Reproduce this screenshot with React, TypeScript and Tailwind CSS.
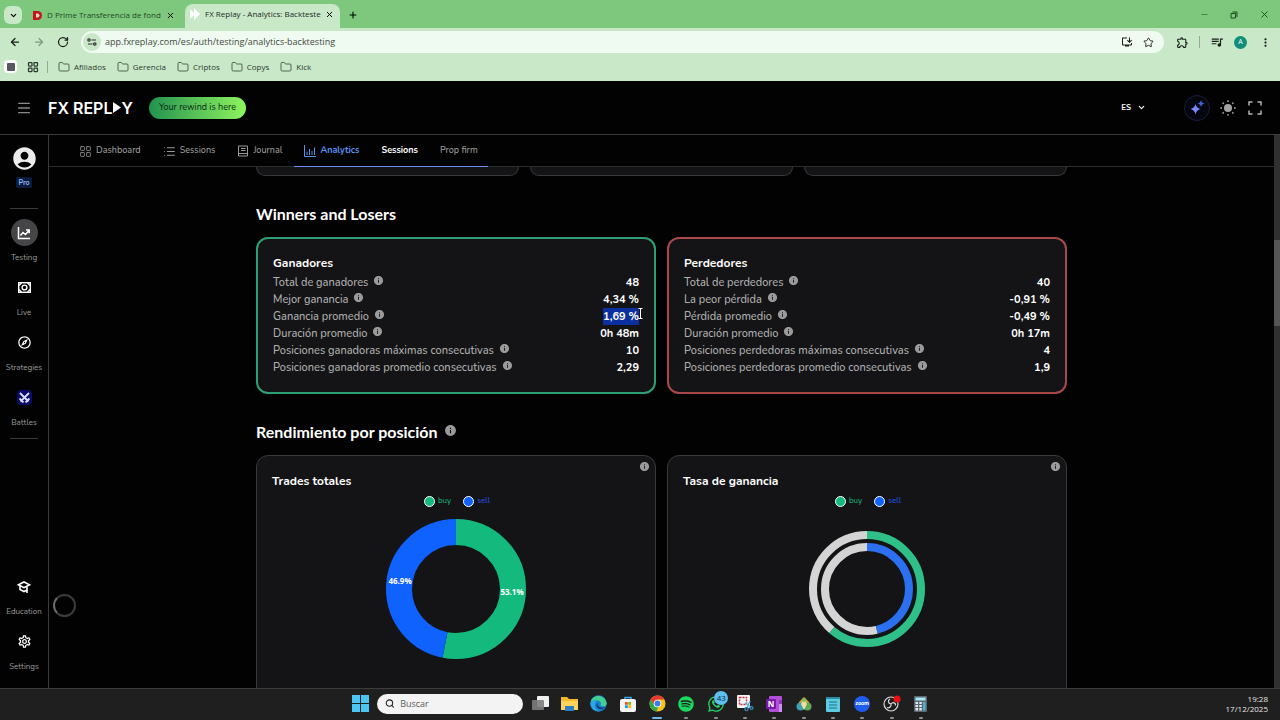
import type { ReactNode } from 'react';
import {
  ArrowLeft,
  ArrowRight,
  ChevronDown,
  Folder,
  LayoutGrid,
  List,
  Menu,
  Minus,
  Plus,
  RotateCw,
  Search,
  Star,
  X,
} from 'lucide-react';
import {
  MdAccountCircle,
  MdInfo,
  MdMoreVert,
  MdOutlineExplore,
  MdOutlineExtension,
  MdOutlineInstallDesktop,
  MdOutlineSettings,
  MdQueueMusic,
} from 'react-icons/md';
import { FaSpotify, FaWhatsapp } from 'react-icons/fa';

const APP_FONT = "font-['Nunito','Lato',sans-serif]";
const CHROME_FONT = "font-['Segoe_UI','Open_Sans',sans-serif]";

const BUY = '#14b97d';
const SELL = '#0f62fe';

interface Stat {
  label: string;
  value: string;
  selected?: boolean;
}

const WINNERS: Stat[] = [
  { label: 'Total de ganadores', value: '48' },
  { label: 'Mejor ganancia', value: '4,34 %' },
  { label: 'Ganancia promedio', value: '1,69 %', selected: true },
  { label: 'Duración promedio', value: '0h 48m' },
  { label: 'Posiciones ganadoras máximas consecutivas', value: '10' },
  { label: 'Posiciones ganadoras promedio consecutivas', value: '2,29' },
];

const LOSERS: Stat[] = [
  { label: 'Total de perdedores', value: '40' },
  { label: 'La peor pérdida', value: '-0,91 %' },
  { label: 'Pérdida promedio', value: '-0,49 %' },
  { label: 'Duración promedio', value: '0h 17m' },
  { label: 'Posiciones perdedoras máximas consecutivas', value: '4' },
  { label: 'Posiciones perdedoras promedio consecutivas', value: '1,9' },
];

const BOOKMARKS = ['Afiliados', 'Gerencia', 'Criptos', 'Copys', 'Kick'];

/* ---------- Browser ---------- */

function TabStrip() {
  return (
    <div className="flex h-7 shrink-0 items-end bg-[#7dc87d] pl-1">
      <button aria-label="Search tabs" className="mb-1 flex h-[18px] w-[18px] items-center justify-center rounded-md bg-[#c8e8c8]">
        <ChevronDown size={9} strokeWidth={3} />
      </button>
      <div className="mb-1 ml-2.5 flex h-[18px] w-[143px] items-center">
        <svg width="11" height="11" viewBox="0 0 11 11" className="shrink-0">
          <path d="M1 1h4.5a4.5 4.5 0 0 1 0 9H1z" fill="#c2151b" />
          <path d="M4 3.5h1.5a2 2 0 0 1 0 4H4z" fill="#e9d2c4" />
        </svg>
        <span className="ml-1 text-[8px] whitespace-nowrap text-[#1f4a22]">D Prime Transferencia de fond</span>
        <button aria-label="Close tab" className="ml-auto"><X size={9} strokeWidth={2.5} /></button>
      </div>
      <div className="ml-2.5 flex h-6 w-[155px] items-center rounded-t-lg bg-[#c8e8c8] pr-1.5 pb-1 pl-1">
        <svg width="12" height="12" viewBox="0 0 12 12" className="shrink-0">
          <path d="M1 1l5 5-5 5zM5 0l6 6-6 6z" fill="#fff" />
        </svg>
        <span className="ml-1 text-[8px] whitespace-nowrap text-[#1d2b1e]">FX Replay - Analytics: Backteste</span>
        <button aria-label="Close tab" className="ml-auto"><X size={9} strokeWidth={2.5} /></button>
      </div>
      <button aria-label="New tab" className="mb-2 ml-2"><Plus size={10} strokeWidth={2.5} /></button>
      <div className="mb-2 ml-auto flex items-center gap-5 pr-2.5 text-[#1d4a20]">
        <button aria-label="Minimize"><Minus size={9} strokeWidth={1.5} /></button>
        <button aria-label="Restore">
          <svg width="10" height="10" viewBox="0 0 10 10" fill="none" stroke="currentColor">
            <path d="M2 3.5h4.5V8H2zM3.5 2H8v5" />
          </svg>
        </button>
        <button aria-label="Close"><X size={11} strokeWidth={2} /></button>
      </div>
    </div>
  );
}

function Toolbar() {
  return (
    <div className="flex h-7 shrink-0 items-center bg-[#c8e8c8] pr-2 pl-[9px] text-[#1b1f1b]">
      <button aria-label="Back"><ArrowLeft size={12} strokeWidth={2.5} /></button>
      <button aria-label="Forward" className="ml-3 text-[#7f9a80]"><ArrowRight size={12} strokeWidth={2.5} /></button>
      <button aria-label="Reload" className="ml-3"><RotateCw size={12} strokeWidth={2.5} /></button>
      <div className="ml-3 flex h-[22px] flex-1 items-center rounded-full bg-[#effaf0] pr-2.5 pl-0.5">
        <button aria-label="Site information" className="flex h-[18px] w-[18px] items-center justify-center rounded-full bg-[#c8e8c8]">
          <svg width="10" height="8" viewBox="0 0 10 8" fill="none" stroke="#333" strokeWidth="1.2">
            <circle cx="2" cy="2" r="1.2" />
            <path d="M4.5 2H9M1 6h4.5" />
            <circle cx="7.8" cy="6" r="1.2" />
          </svg>
        </button>
        <input
          aria-label="Address"
          defaultValue="app.fxreplay.com/es/auth/testing/analytics-backtesting"
          className="ml-1 min-w-0 flex-1 bg-transparent text-[9px] text-[#3f4a40] outline-none"
        />
        <button aria-label="Install app"><MdOutlineInstallDesktop size={12} /></button>
        <button aria-label="Bookmark page" className="ml-2.5"><Star size={11} strokeWidth={2} /></button>
      </div>
      <button aria-label="Extensions" className="ml-3"><MdOutlineExtension size={13} /></button>
      <span className="ml-2.5 h-3 w-px bg-[#8fae90]" />
      <button aria-label="Media" className="ml-2.5"><MdQueueMusic size={14} /></button>
      <button aria-label="Profile" className="ml-2.5 flex h-[13px] w-[13px] items-center justify-center rounded-full bg-[#0f8f78] text-[7px] text-white">A</button>
      <button aria-label="Menu" className="ml-3"><MdMoreVert size={13} /></button>
    </div>
  );
}

function BookmarkBar() {
  return (
    <div className="flex h-[25px] shrink-0 items-center bg-[#c8e8c8] pb-1 pl-1 text-[8px] text-[#2c3a2d]">
      <span className="flex h-[13px] w-[13px] items-center justify-center rounded-sm bg-white">
        <span className="h-2 w-2 rounded-[1px] bg-[#56595f]" />
      </span>
      <LayoutGrid size={12} strokeWidth={2.5} className="ml-2.5" />
      <span className="ml-2 h-3 w-px bg-[#8fae90]" />
      <div className="ml-2.5 flex items-center gap-[11px]">
        {BOOKMARKS.map((name) => (
          <a key={name} href="#" className="flex items-center gap-1">
            <Folder size={12} strokeWidth={1.5} />
            {name}
          </a>
        ))}
      </div>
    </div>
  );
}

/* ---------- App shell ---------- */

function Header() {
  return (
    <header className="flex h-[54px] shrink-0 items-center border-b border-[#3a3a3a] pr-[18px] pl-4">
      <button aria-label="Toggle menu" className="text-[#8b8b8b]"><Menu size={16} strokeWidth={2} /></button>
      <a href="#" aria-label="FX REPLAY" className="ml-4 flex items-center font-['Inter',sans-serif] text-[16px] leading-none font-semibold text-white">
        <span className="whitespace-pre">FX REPL</span>
        <svg width="9" height="11" viewBox="0 0 9 11"><path d="M1 0l8 5.5L1 11z" fill="#fff" /></svg>
        <span>Y</span>
      </a>
      <button className="ml-4 h-[22px] rounded-full bg-linear-to-r from-[#1e9350] to-[#8cf55c] px-2.5 text-[9px] text-[#0c2a14]">
        Your rewind is here
      </button>
      <button className="ml-auto flex items-center gap-1.5 text-[8px] font-bold text-white">
        ES
        <ChevronDown size={9} strokeWidth={3} />
      </button>
      <button aria-label="AI assistant" className="ml-[38px] flex h-[26px] w-[26px] items-center justify-center rounded-full border border-[#1b1f3a] bg-[#05060f]">
        <svg width="16" height="16" viewBox="0 0 16 16">
          <path d="M6.5 4q.8 4 5 5-4.2 1-5 5.500-.8-4.500-5-5.500 4.200-1 5-5z" fill="#7b86ff" />
          <path d="M12 0q.5 3 3.500 3.500Q12.500 4 12 7q-.5-3-3.500-3.500Q11.500 3 12 0z" fill="#3c63d8" />
        </svg>
      </button>
      <button aria-label="Theme" className="ml-2.5 text-[#a3a3a3]">
        <svg width="16" height="16" viewBox="0 0 16 16" fill="currentColor">
          <circle cx="8" cy="8" r="4" />
          {[0, 45, 90, 135, 180, 225, 270, 315].map((deg) => (
            <circle key={deg} cx="8" cy="1.2" r="0.9" transform={`rotate(${deg} 8 8)`} />
          ))}
        </svg>
      </button>
      <button aria-label="Full screen" className="ml-3 text-[#b5b5b5]">
        <svg width="14" height="14" viewBox="0 0 14 14" fill="none" stroke="currentColor" strokeWidth="1.5">
          <path d="M1 4.500V1h3.500M9.500 1H13v3.500M13 9.500V13H9.500M4.500 13H1V9.500" />
        </svg>
      </button>
    </header>
  );
}

function SideItem({ label, active, children }: { label: string; active?: boolean; children: ReactNode }) {
  return (
    <a href="#" className="flex w-full flex-col items-center">
      <span
        className={
          active
            ? 'flex h-[27px] w-[27px] items-center justify-center rounded-full bg-[#454548] text-white'
            : 'flex h-[27px] w-[27px] items-center justify-center text-white'
        }
      >
        {children}
      </span>
      <span className="mt-[5px] text-[8px] leading-[14px] text-[#9c9c9c]">{label}</span>
    </a>
  );
}

function Sidebar() {
  return (
    <aside className="flex w-[49px] shrink-0 flex-col items-center border-r border-[#3a3a3a] pt-2.5 pb-3.5">
      <MdAccountCircle size={27} className="text-[#ececec]" />
      <span className="mt-[5px] rounded-xs bg-[#0a1d40] px-0.5 text-[7px] leading-[11px] font-bold text-[#8fb6f5]">Pro</span>
      <span className="mt-5 h-px w-7 shrink-0 bg-[#3a3a3a]" />
      <nav className="mt-2.5 flex w-full flex-col gap-[9px]">
        <SideItem label="Testing" active>
          <svg width="14" height="14" viewBox="0 0 14 14" fill="none" stroke="currentColor" strokeWidth="1.5">
            <path d="M1.500 1v11.500H13M3.500 9.500l2.500-3 2.500 2 3.500-4M9 4h3.200v3.200" />
          </svg>
        </SideItem>
        <SideItem label="Live">
          <svg width="13" height="11" viewBox="0 0 13 11" fill="none" stroke="currentColor" strokeWidth="1.4">
            <rect x="0.7" y="0.7" width="11.6" height="9.6" />
            <circle cx="6.5" cy="5.5" r="2.4" />
            <path d="M1 3.500L3.500 1M9.500 1L12 3.500M1 7.500L3.500 10M12 7.500L9.500 10" />
          </svg>
        </SideItem>
        <SideItem label="Strategies"><MdOutlineExplore size={15} /></SideItem>
        <SideItem label="Battles">
          <span className="flex h-[15px] w-[15px] items-center justify-center rounded-sm bg-[#0c0c66]">
            <svg width="11" height="11" viewBox="0 0 11 11" fill="none" stroke="#d6dcff" strokeWidth="1.8">
              <path d="M1 1l8.500 8.500M10 1L1.500 9.500M0.500 6.500l4 4M10.500 6.500l-4 4" />
            </svg>
          </span>
        </SideItem>
      </nav>
      <span className="mt-2 h-px w-7 shrink-0 bg-[#3a3a3a]" />
      <nav className="mt-auto flex w-full flex-col gap-[9px]">
        <SideItem label="Education">
          <svg width="14" height="14" viewBox="0 0 14 14" fill="none" stroke="currentColor" strokeWidth="1.6">
            <path d="M1.500 4.800L7 2l5.500 2.800L7 7.600zM3 6v3.500L7 11.500l3-1.500M10 6v7" />
          </svg>
        </SideItem>
        <SideItem label="Settings"><MdOutlineSettings size={15} /></SideItem>
      </nav>
    </aside>
  );
}

function SectionNav() {
  return (
    <nav className="flex h-8 shrink-0 items-stretch border-b border-[#2c2c2c] pl-[30px] text-[9px] font-medium text-[#9a9a9a]">
      <a href="#" className="flex items-center gap-1 pt-px">
        <LayoutGrid size={13} strokeWidth={1.5} />
        Dashboard
      </a>
      <a href="#" className="ml-[22px] flex items-center gap-1 pt-px">
        <List size={13} strokeWidth={2} />
        Sessions
      </a>
      <a href="#" className="ml-[22px] flex items-center gap-1 pt-px">
        <svg width="12" height="12" viewBox="0 0 12 12" fill="none" stroke="currentColor">
          <path d="M1.500 1h9v10h-9zM1.500 8.500h9M4 3.500h4.500M4 5.500h4.500" />
        </svg>
        Journal
      </a>
      <div className="-mb-px ml-3 flex border-b border-[#6a8fe8] px-2.5">
        <a href="#" className="flex items-center gap-1 pt-px font-bold text-[#5b92f2]">
          <svg width="12" height="12" viewBox="0 0 12 12" fill="none" stroke="currentColor">
            <path d="M0.500 0v11.500H12M3 10V6.500M5.500 10V4M8 10V6M10.500 10V2.500" />
          </svg>
          Analytics
        </a>
        <a href="#" className="ml-[22px] flex items-center pt-px font-bold text-white">Sessions</a>
        <a href="#" className="ml-[22px] flex items-center pt-px">Prop firm</a>
      </div>
    </nav>
  );
}

/* ---------- Analytics ---------- */

function StatCard({ title, stats, tone }: { title: string; stats: Stat[]; tone: 'win' | 'loss' }) {
  const border = tone === 'win' ? 'border-[#2f9e74]' : 'border-[#a8484a]';
  return (
    <article className={`rounded-xl border-2 bg-[#141416] px-[15px] pt-[15px] pb-4 ${border}`}>
      <h3 className="text-[12px] leading-[18px] font-bold text-white">{title}</h3>
      <dl className="mt-0.5">
        {stats.map((s) => (
          <div key={s.label} className="flex h-[17px] items-center justify-between text-[11px] leading-[17px]">
            <dt className="flex items-start gap-[5px] font-medium text-[#b0b0b0]">
              {s.label}
              <MdInfo size={11} className="mt-px text-[#9a9a9a]" />
            </dt>
            <dd className={s.selected ? 'relative bg-[#0b2f9f] font-bold text-white' : 'font-bold text-white'}>
              {s.value}
              {s.selected && (
                <svg width="5" height="11" viewBox="0 0 5 11" className="absolute top-0 -right-1" fill="none" stroke="#fff">
                  <path d="M0.500 0.500h4M0.500 10.500h4M2.500 0.500v10" />
                </svg>
              )}
            </dd>
          </div>
        ))}
      </dl>
    </article>
  );
}

/** One ring segment drawn as a dashed circle, starting at 12 o'clock */
function Ring({ r, width, from = 0, to, color }: { r: number; width: number; from?: number; to: number; color: string }) {
  return (
    <circle
      cx="70"
      cy="70"
      r={r}
      fill="none"
      stroke={color}
      strokeWidth={width}
      pathLength={100}
      strokeDasharray={`${to - from} ${100 - (to - from)}`}
      strokeDashoffset={-from}
      transform="rotate(-90 70 70)"
    />
  );
}

function ChartCard({ title, children }: { title: string; children: ReactNode }) {
  return (
    <article className="relative h-[250px] rounded-xl border border-[#39393b] bg-[#141416] px-[15px] pt-4">
      <button aria-label={`Info: ${title}`} className="absolute top-[5px] right-[5px] text-[#9a9a9a]">
        <MdInfo size={11} />
      </button>
      <h3 className="text-[12px] leading-[18px] font-bold text-white">{title}</h3>
      <div className="mt-[3px] flex h-4 items-center justify-center gap-3 pl-0.5 text-[8px]">
        <span className="flex items-center gap-[3px] text-[#14b97d]">
          <i className="h-[11px] w-[11px] rounded-full border border-white bg-[#14b97d]" />
          buy
        </span>
        <span className="flex items-center gap-[3px] text-[#2258ec]">
          <i className="h-[11px] w-[11px] rounded-full border border-white bg-[#0f62fe]" />
          sell
        </span>
      </div>
      <svg width="140" height="140" viewBox="0 0 140 140" className="mx-auto mt-2.5">
        {children}
      </svg>
    </article>
  );
}

function Analytics() {
  return (
    <div className="min-h-0 flex-1 overflow-hidden">
      <div className="mx-auto max-w-[811px]">
        <div className="grid grid-cols-3 gap-[11px]">
          {[0, 1, 2].map((i) => (
            <div key={i} className="h-[9px] rounded-b-xl border border-t-0 border-[#39393b] bg-[#141416]" />
          ))}
        </div>

        <h2 className="mt-[27px] font-['Lato',sans-serif] text-[16px] leading-[22px] font-bold text-white">Winners and Losers</h2>
        <div className="mt-3 grid grid-cols-2 gap-[11px]">
          <StatCard title="Ganadores" stats={WINNERS} tone="win" />
          <StatCard title="Perdedores" stats={LOSERS} tone="loss" />
        </div>

        <h2 className="mt-[27px] flex items-center gap-1.5 font-['Lato',sans-serif] text-[16px] leading-[22px] font-bold text-white">
          Rendimiento por posición
          <MdInfo size={13} className="mb-1 text-[#9a9a9a]" />
        </h2>
        <div className="mt-3 grid grid-cols-2 gap-[11px]">
          <ChartCard title="Trades totales">
            <Ring r={57} width={26} to={53.1} color={BUY} />
            <Ring r={57} width={26} from={53.1} to={100} color={SELL} />
            <g fill="#fff" fontSize="8" fontWeight="700" textAnchor="middle" className="font-['Open_Sans',sans-serif]">
              <text x="126" y="76">53.1%</text>
              <text x="14" y="65">46.9%</text>
            </g>
          </ChartCard>
          <ChartCard title="Tasa de ganancia">
            <Ring r={54} width={8} to={61.3} color="#2fc08a" />
            <Ring r={54} width={8} from={61.3} to={100} color="#d4d4d4" />
            <Ring r={42} width={8} to={46.3} color="#2b70f0" />
            <Ring r={42} width={8} from={46.3} to={100} color="#d4d4d4" />
          </ChartCard>
        </div>
      </div>
    </div>
  );
}

/* ---------- Windows taskbar ---------- */

function TaskIcon({ label, running, children }: { label: string; running?: boolean; children: ReactNode }) {
  return (
    <button aria-label={label} className="relative flex h-[30px] w-[29px] items-center justify-center">
      {children}
      {running && <span className="absolute bottom-0 h-[2px] w-1 rounded-full bg-[#8f8f8f]" />}
    </button>
  );
}

function Taskbar() {
  return (
    <footer className={`relative flex h-8 shrink-0 items-center justify-center border-t border-[#3c3c3c] bg-[#1f1f1f] pb-0.5 pl-[7px] ${CHROME_FONT}`}>
      <button aria-label="Start" className="mr-2">
        <svg width="17" height="17" viewBox="0 0 17 17" fill="#4cc5f2">
          <path d="M0 0h8v8H0zM9 0h8v8H9zM0 9h8v8H0zM9 9h8v8H9z" />
        </svg>
      </button>
      <label className="mr-[3px] flex h-5 w-[146px] items-center gap-1.5 rounded-full bg-[#f3f3f3] px-2">
        <Search size={11} strokeWidth={2.5} className="text-[#222]" />
        <input aria-label="Buscar" placeholder="Buscar" className="w-full bg-transparent text-[9px] outline-none placeholder:text-[#5c5c5c]" />
      </label>
      <div className="flex w-[410px] justify-between">
        <TaskIcon label="Task view">
          <svg width="17" height="15" viewBox="0 0 17 15">
            <rect x="5" y="0" width="12" height="11" rx="1" fill="#f1f1f1" />
            <rect x="0" y="4" width="12" height="10" rx="1" fill="#7c7c7c" opacity="0.9" />
          </svg>
        </TaskIcon>
        <TaskIcon label="Explorer">
          <svg width="17" height="15" viewBox="0 0 17 15">
            <path d="M0 1h6l2 2h9v11H0z" fill="#f5b92e" />
            <path d="M0 5h17v9H0z" fill="#fdd35c" />
            <path d="M4 10h9v5H4z" fill="#2f7fc4" />
          </svg>
        </TaskIcon>
        <TaskIcon label="Edge">
          <svg width="17" height="17" viewBox="0 0 17 17">
            <circle cx="8.500" cy="8.500" r="8.200" fill="#1b7fd0" />
            <path d="M.6 7C2-1 15-1.500 16.700 8c.2 4-5.700 4-6.200 2 1-2 0-4.500-3-4.500C4 5.500 1.500 5.500.6 7z" fill="#41cf93" />
            <path d="M6.500 7C3 9.500 5 15.500 10 16 4 17.500-.5 12 .6 7c2-2 5-1.500 5.900 0z" fill="#2aa7e6" />
            <path d="M7.500 8c0 4 4 5.500 8 4-2 3-8 3-9-1 0-1 .3-2.500 1-3z" fill="#0d3f7d" />
          </svg>
        </TaskIcon>
        <TaskIcon label="Store">
          <svg width="16" height="16" viewBox="0 0 16 16">
            <path d="M5 4V1.500h6V4" fill="none" stroke="#38a5e8" strokeWidth="1.5" />
            <rect x="0" y="3" width="16" height="13" rx="2" fill="#f4f4f4" />
            <path d="M5 6h2.800v2.800H5z" fill="#f25022" />
            <path d="M8.300 6h2.800v2.800H8.300z" fill="#7fba00" />
            <path d="M5 9.300h2.800v2.800H5z" fill="#00a4ef" />
            <path d="M8.300 9.300h2.800v2.800H8.300z" fill="#ffb900" />
          </svg>
        </TaskIcon>
        <TaskIcon label="Chrome">
          <svg width="17" height="17" viewBox="0 0 18 18">
            <circle cx="9" cy="9" r="8.500" fill="#fbc116" />
            <path d="M1.600 4.800A8.500 8.500 0 0 1 16.400 4.800H9L5.400 11z" fill="#e33b2e" />
            <path d="M1.600 4.800L5.400 11Q7 13.500 9.800 13L7.800 17.400A8.500 8.500 0 0 1 1.600 4.800z" fill="#2da94f" />
            <circle cx="9" cy="9" r="4" fill="#fff" />
            <circle cx="9" cy="9" r="3.100" fill="#3b7ded" />
          </svg>
          <span className="absolute bottom-0 h-[2px] w-[10px] rounded-full bg-[#6cb8f0]" />
        </TaskIcon>
        <TaskIcon label="Spotify" running><FaSpotify size={16} color="#1ed760" /></TaskIcon>
        <TaskIcon label="WhatsApp" running>
          <FaWhatsapp size={18} color="#25d366" />
          <span className="absolute top-0.5 right-0.5 flex h-3.5 w-3.5 items-center justify-center rounded-full bg-[#5cc0f0] text-[8px] text-[#0c2c40]">43</span>
        </TaskIcon>
        <TaskIcon label="Snipping tool" running>
          <svg width="17" height="17" viewBox="0 0 17 17">
            <rect width="13" height="13" rx="1" fill="#f5f5f5" />
            <rect x="2.500" y="2.500" width="7" height="7" fill="none" stroke="#c5384a" strokeWidth="1.5" strokeDasharray="2 1" />
            <path d="M8 8l6 4M13 6l-3 7" stroke="#5fb4dc" strokeWidth="1.5" />
            <circle cx="9.500" cy="14" r="1.600" fill="none" stroke="#3a86b8" strokeWidth="1.3" />
            <circle cx="14.500" cy="13" r="1.400" fill="none" stroke="#3a86b8" strokeWidth="1.3" />
          </svg>
        </TaskIcon>
        <TaskIcon label="OneNote" running>
          <svg width="16" height="16" viewBox="0 0 16 16">
            <rect x="3" width="13" height="16" rx="1" fill="#b14fd8" />
            <path d="M13 4h3v4h-3z" fill="#8d35b8" />
            <path d="M13 8h3v8h-3z" fill="#d58cf0" />
            <rect y="3" width="10" height="10" rx="1" fill="#7719aa" />
            <text x="5" y="11" fill="#fff" fontSize="8" fontWeight="700" textAnchor="middle">N</text>
          </svg>
        </TaskIcon>
        <TaskIcon label="MetaTrader" running>
          <svg width="16" height="16" viewBox="0 0 16 16">
            <path d="M8 1l5 5v4H3V6z" fill="#d6a93c" />
            <circle cx="4.500" cy="10.500" r="4" fill="#3e9fb5" />
            <circle cx="11.500" cy="10.500" r="4" fill="#5ea957" />
            <path d="M8 3l3 5-3 6-3-6z" fill="#f1e0a0" />
            <circle cx="8" cy="4" r="2" fill="#7cc04d" />
          </svg>
        </TaskIcon>
        <TaskIcon label="Notepad" running>
          <svg width="14" height="16" viewBox="0 0 14 16">
            <rect y="1" width="14" height="15" rx="1" fill="#5dcbe0" />
            <path d="M0 1h14v2H0z" fill="#2a8ea6" />
            <path d="M3 6h8M3 9h8M3 12h8" stroke="#1e6f85" />
          </svg>
        </TaskIcon>
        <TaskIcon label="Zoom" running>
          <span className="flex h-4 w-4 items-center justify-center rounded-full bg-[#1f5cf0] text-[5px] font-bold text-white">zoom</span>
        </TaskIcon>
        <TaskIcon label="OBS" running>
          <svg width="18" height="17" viewBox="0 0 18 17">
            <circle cx="8" cy="9" r="7" fill="#1d1d1d" stroke="#dcdcdc" strokeWidth="1.2" />
            <path d="M8 9C5 8.500 4.500 5.500 7 4M8 9c2-2.500 5-1 4.500 1.500M8 9c.5 3-2 4.500-4 3.500" fill="none" stroke="#dcdcdc" strokeWidth="1.2" />
            <circle cx="14" cy="4" r="3.600" fill="#e81010" />
          </svg>
        </TaskIcon>
        <TaskIcon label="Calculator" running>
          <svg width="13" height="16" viewBox="0 0 13 16">
            <rect width="13" height="16" rx="1" fill="#5b6770" />
            <path d="M1.500 1.500h10v3h-10z" fill="#a8e4f2" />
            <path d="M1.500 6H4v2H1.500zM5.300 6h2.500v2H5.300zM1.500 9H4v2H1.500zM5.300 9h2.500v2H5.300zM1.500 12H4v2.500H1.500zM5.300 12h2.500v2.500H5.300z" fill="#e3e9ec" />
            <path d="M9 6h2.500v8.500H9z" fill="#49b4d4" />
          </svg>
        </TaskIcon>
      </div>
      <div className="absolute right-3 text-right text-[8px] leading-[10px] text-[#e6e6e6]">
        <div>19:28</div>
        <div>17/12/2025</div>
      </div>
    </footer>
  );
}

export default function App() {
  return (
    <div className="flex h-screen flex-col overflow-hidden bg-black">
      <div className={`shrink-0 ${CHROME_FONT}`}>
        <TabStrip />
        <Toolbar />
        <BookmarkBar />
      </div>
      <div className={`relative flex min-h-0 flex-1 flex-col bg-[#020202] ${APP_FONT}`}>
        <Header />
        <div className="flex min-h-0 flex-1">
          <Sidebar />
          <main className="flex min-w-0 flex-1 flex-col">
            <SectionNav />
            <Analytics />
          </main>
          <div className="w-1.5 shrink-0 bg-[#303030] pt-[105px]">
            <div className="h-[86px] bg-[#555555]" />
          </div>
        </div>
        {/* floating loader */}
        <span className="absolute bottom-[71px] left-[53px] h-[23px] w-[23px] rounded-full border-2 border-[#3c3c3c] border-l-[#6a6a6a]" />
      </div>
      <Taskbar />
    </div>
  );
}
